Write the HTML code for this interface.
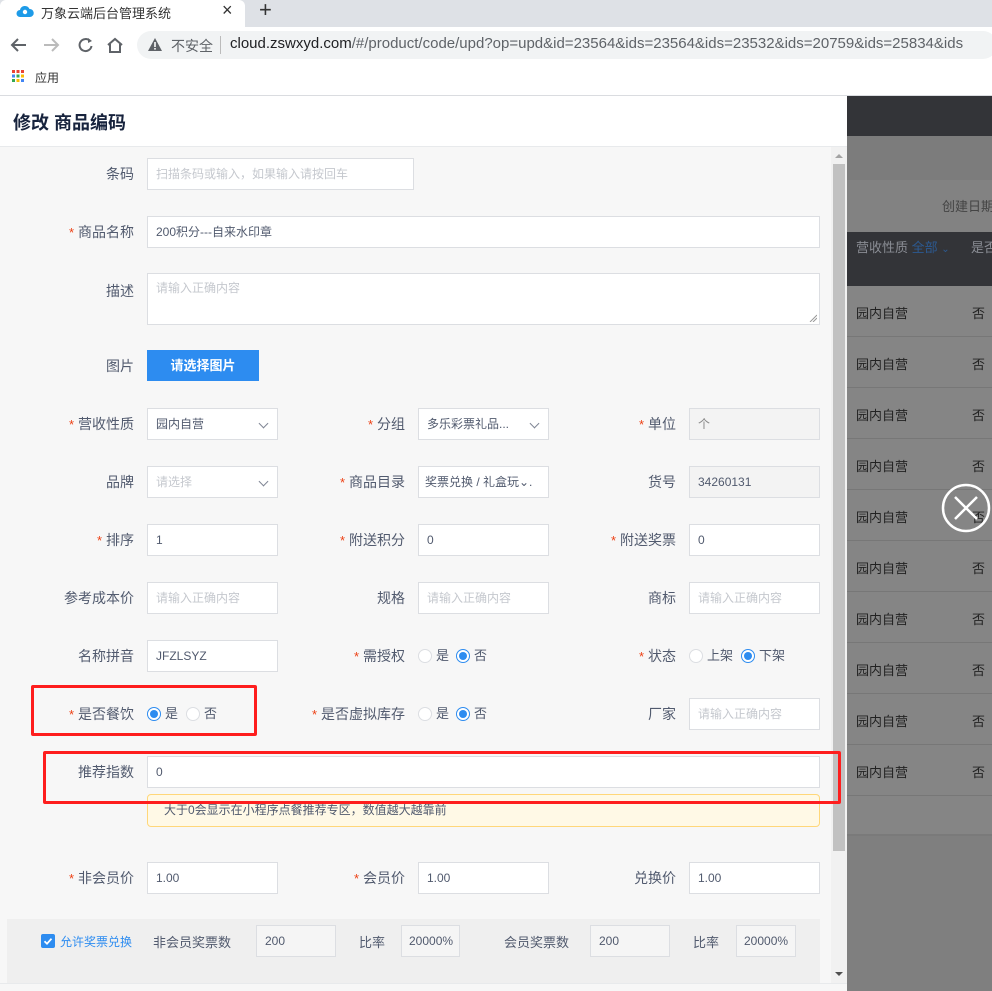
<!DOCTYPE html>
<html><head><meta charset="utf-8">
<style>
*{margin:0;padding:0;box-sizing:border-box}
body{width:992px;height:991px;overflow:hidden;position:relative;background:#fff;font-family:"Liberation Sans","Noto Sans CJK SC",sans-serif;font-size:13px;color:#515a6e}
.a{position:absolute}
.lb{position:absolute;width:134px;text-align:right;font-size:14px;color:#515a6e;line-height:20px}
.lb i{font-style:normal;color:#ed4014;font-size:13px;margin-right:4px}
.in{position:absolute;height:32px;background:#fff;border:1px solid #dcdee2;line-height:30px;padding-left:8px;font-size:12px;color:#515a6e;white-space:nowrap;overflow:hidden}
.ph{color:#c5c8ce}
.dis{background:#f3f3f3}
.chev{position:absolute;right:10px;top:11px;width:7px;height:7px;border-right:1.3px solid #808695;border-bottom:1.3px solid #808695;transform:rotate(45deg)}
.rad{position:absolute;width:14px;height:14px;border:1px solid #dcdee2;border-radius:50%;background:#fff}
.rad.on{border-color:#2d8cf0}
.rad.on:after{content:"";position:absolute;left:2px;top:2px;width:8px;height:8px;border-radius:50%;background:#2d8cf0}
.rt{position:absolute;font-size:13px;color:#515a6e;line-height:16px}
.row{position:absolute;left:847px;width:145px;height:51px;border-bottom:1px solid #777;background:#858585}
.row span{position:absolute;top:17px;font-size:13px;color:#222}
</style></head><body>
<div class="a" style="left:0;top:0;width:992px;height:27px;background:#dee1e6"></div>
<div class="a" style="left:0;top:0;width:245px;height:28px;background:#fff;border-radius:6px 6px 0 0"></div>
<svg class="a" style="left:16px;top:4px" width="18" height="16" viewBox="0 0 18 16"><path d="M4 13a3.5 3.5 0 0 1 0-7 5 5 0 0 1 9.5-1A4 4 0 0 1 14 13z" fill="#1e9be8"/><circle cx="9" cy="8" r="2.2" fill="#fff"/></svg>
<div class="a" style="left:41px;top:3px;font-size:13px;color:#333">万象云端后台管理系统</div>
<div class="a" style="left:222px;top:0px;font-size:18px;color:#333">×</div>
<div class="a" style="left:259px;top:-3px;font-size:22px;color:#333">+</div>
<svg class="a" style="left:10px;top:36px" width="120" height="18" viewBox="0 0 120 18"><path d="M16 9H3M8 3L2 9l6 6" stroke="#5f6368" stroke-width="2" fill="none"/><path d="M34 9h13M42 3l6 6-6 6" stroke="#bbb" stroke-width="2" fill="none"/><path d="M80 5a6 6 0 1 0 1.5 5" stroke="#5f6368" stroke-width="2" fill="none"/><path d="M78 2l4 3-4 2z" fill="#5f6368"/><path d="M98 9l7-6 7 6M100 8v8h10V8" stroke="#5f6368" stroke-width="2" fill="none"/></svg>
<div class="a" style="left:137px;top:31px;width:860px;height:28px;background:#f1f3f4;border-radius:14px"></div>
<svg class="a" style="left:147px;top:37px" width="16" height="15" viewBox="0 0 16 15"><path d="M8 1L15 14H1z" fill="#5f6368"/><rect x="7.2" y="5" width="1.6" height="5" fill="#fff"/><rect x="7.2" y="11" width="1.6" height="1.6" fill="#fff"/></svg>
<div class="a" style="left:171px;top:36px;font-size:14px;color:#5f6368">不安全</div>
<div class="a" style="left:220px;top:36px;width:1px;height:18px;background:#bbb"></div>
<div class="a" style="left:230px;top:35px;font-size:15px;color:#202124;white-space:nowrap">cloud.zswxyd.com<span style="color:#5f6368">/#/product/code/upd?op=upd&amp;id=23564&amp;ids=23564&amp;ids=23532&amp;ids=20759&amp;ids=25834&amp;ids</span></div>
<svg class="a" style="left:12px;top:70px" width="12" height="12"><rect x="0" y="0" width="3" height="3" fill="#ea4335"/><rect x="4.5" y="0" width="3" height="3" fill="#ea4335"/><rect x="9" y="0" width="3" height="3" fill="#ea4335"/><rect x="0" y="4.5" width="3" height="3" fill="#4285f4"/><rect x="4.5" y="4.5" width="3" height="3" fill="#34a853"/><rect x="9" y="4.5" width="3" height="3" fill="#fbbc05"/><rect x="0" y="9" width="3" height="3" fill="#34a853"/><rect x="4.5" y="9" width="3" height="3" fill="#fbbc05"/><rect x="9" y="9" width="3" height="3" fill="#4285f4"/></svg>
<div class="a" style="left:35px;top:69px;font-size:12px;color:#333">应用</div>
<div class="a" style="left:0;top:95px;width:992px;height:1px;background:#dadce0"></div>
<div class="a" style="left:13px;top:109px;font-size:18px;font-weight:bold;color:#17233d">修改 商品编码</div>
<div class="a" style="left:0;top:146px;width:847px;height:1px;background:#e8eaec"></div>
<div class="a" style="left:0;top:147px;width:831px;height:844px;background:#f7f7f7"></div>
<div class="a" style="left:831px;top:147px;width:16px;height:844px;background:#f1f1f1"></div>
<div class="a" style="left:833px;top:164px;width:12px;height:687px;background:#c1c1c1"></div>
<div class="a" style="left:835px;top:154px;width:0;height:0;border-left:4px solid transparent;border-right:4px solid transparent;border-bottom:4px solid #a3a3a3"></div>
<div class="a" style="left:835px;top:972px;width:0;height:0;border-left:4px solid transparent;border-right:4px solid transparent;border-top:4px solid #505050"></div>
<div class="a" style="left:0;top:983px;width:847px;height:8px;background:#f7f7f7;border-top:1px solid #e8eaec"></div>

<div class="lb" style="left:0;top:164px">条码</div>
<div class="in" style="left:147px;top:158px;width:267px"><span class="ph">扫描条码或输入，如果输入请按回车</span></div>
<div class="lb" style="left:0;top:222px"><i>*</i>商品名称</div>
<div class="in" style="left:147px;top:216px;width:673px">200积分---自来水印章</div>
<div class="lb" style="left:0;top:281px">描述</div>
<div class="in" style="left:147px;top:273px;width:673px;height:52px;line-height:28px"><span class="ph">请输入正确内容</span></div>
<svg class="a" style="left:809px;top:314px" width="8" height="8"><path d="M1 8L8 1M4 8L8 4" stroke="#999" stroke-width="1"/></svg>
<div class="lb" style="left:0;top:356px">图片</div>
<div class="a" style="left:147px;top:350px;width:112px;height:31px;background:#2d8cf0;color:#fff;font-size:13px;font-weight:bold;text-align:center;line-height:31px">请选择图片</div>

<div class="lb" style="left:0;top:414px"><i>*</i>营收性质</div>
<div class="in" style="left:147px;top:408px;width:131px">园内自营<span class="chev"></span></div>
<div class="lb" style="left:271px;top:414px"><i>*</i>分组</div>
<div class="in" style="left:418px;top:408px;width:131px">多乐彩票礼品...<span class="chev"></span></div>
<div class="lb" style="left:542px;top:414px"><i>*</i>单位</div>
<div class="in dis" style="left:689px;top:408px;width:131px;color:#888">个</div>

<div class="lb" style="left:0;top:472px">品牌</div>
<div class="in" style="left:147px;top:466px;width:131px"><span class="ph">请选择</span><span class="chev"></span></div>
<div class="lb" style="left:271px;top:472px"><i>*</i>商品目录</div>
<div class="in" style="left:418px;top:466px;width:131px;padding-left:6px">奖票兑换 / 礼盒玩⌄.</div>
<div class="lb" style="left:542px;top:472px">货号</div>
<div class="in dis" style="left:689px;top:466px;width:131px">34260131</div>

<div class="lb" style="left:0;top:530px"><i>*</i>排序</div>
<div class="in" style="left:147px;top:524px;width:131px">1</div>
<div class="lb" style="left:271px;top:530px"><i>*</i>附送积分</div>
<div class="in" style="left:418px;top:524px;width:131px">0</div>
<div class="lb" style="left:542px;top:530px"><i>*</i>附送奖票</div>
<div class="in" style="left:689px;top:524px;width:131px">0</div>

<div class="lb" style="left:0;top:588px">参考成本价</div>
<div class="in" style="left:147px;top:582px;width:131px"><span class="ph">请输入正确内容</span></div>
<div class="lb" style="left:271px;top:588px">规格</div>
<div class="in" style="left:418px;top:582px;width:131px"><span class="ph">请输入正确内容</span></div>
<div class="lb" style="left:542px;top:588px">商标</div>
<div class="in" style="left:689px;top:582px;width:131px"><span class="ph">请输入正确内容</span></div>

<div class="lb" style="left:0;top:646px">名称拼音</div>
<div class="in" style="left:147px;top:640px;width:131px">JFZLSYZ</div>
<div class="lb" style="left:271px;top:646px"><i>*</i>需授权</div>
<div class="rad" style="left:418px;top:649px"></div><div class="rt" style="left:436px;top:648px">是</div>
<div class="rad on" style="left:456px;top:649px"></div><div class="rt" style="left:474px;top:648px">否</div>
<div class="lb" style="left:542px;top:646px"><i>*</i>状态</div>
<div class="rad" style="left:689px;top:649px"></div><div class="rt" style="left:707px;top:648px">上架</div>
<div class="rad on" style="left:741px;top:649px"></div><div class="rt" style="left:759px;top:648px">下架</div>

<div class="lb" style="left:0;top:704px"><i>*</i>是否餐饮</div>
<div class="rad on" style="left:147px;top:707px"></div><div class="rt" style="left:165px;top:706px">是</div>
<div class="rad" style="left:186px;top:707px"></div><div class="rt" style="left:204px;top:706px">否</div>
<div class="lb" style="left:271px;top:704px;white-space:nowrap"><i>*</i>是否虚拟库存</div>
<div class="rad" style="left:418px;top:707px"></div><div class="rt" style="left:436px;top:706px">是</div>
<div class="rad on" style="left:456px;top:707px"></div><div class="rt" style="left:474px;top:706px">否</div>
<div class="lb" style="left:542px;top:704px">厂家</div>
<div class="in" style="left:689px;top:698px;width:131px"><span class="ph">请输入正确内容</span></div>

<div class="lb" style="left:0;top:762px">推荐指数</div>
<div class="in" style="left:147px;top:756px;width:673px">0</div>
<div class="a" style="left:147px;top:794px;width:673px;height:33px;background:#fff9e6;border:1px solid #ffd77a;border-radius:4px;font-size:12px;color:#515a6e;padding:6px 0 0 16px">大于0会显示在小程序点餐推荐专区，数值越大越靠前</div>

<div class="lb" style="left:0;top:868px"><i>*</i>非会员价</div>
<div class="in" style="left:147px;top:862px;width:131px">1.00</div>
<div class="lb" style="left:271px;top:868px"><i>*</i>会员价</div>
<div class="in" style="left:418px;top:862px;width:131px">1.00</div>
<div class="lb" style="left:542px;top:868px">兑换价</div>
<div class="in" style="left:689px;top:862px;width:131px">1.00</div>

<div class="a" style="left:7px;top:919px;width:813px;height:64px;background:#efefef"></div>
<div class="a" style="left:41px;top:934px;width:14px;height:14px;background:#2d8cf0;border-radius:2px"></div>
<svg class="a" style="left:41px;top:934px" width="14" height="14"><path d="M3.5 7.2l2.5 2.5 4.5-5" stroke="#fff" stroke-width="1.8" fill="none"/></svg>
<div class="a" style="left:60px;top:933px;font-size:12px;color:#2d8cf0">允许奖票兑换</div>
<div class="a" style="left:153px;top:932px;font-size:13px">非会员奖票数</div>
<div class="in" style="left:256px;top:925px;width:80px;background:#f5f5f5">200</div>
<div class="a" style="left:359px;top:932px;font-size:13px">比率</div>
<div class="in" style="left:401px;top:925px;width:59px;background:#f5f5f5;padding-left:7px">20000%</div>
<div class="a" style="left:504px;top:932px;font-size:13px">会员奖票数</div>
<div class="in" style="left:590px;top:925px;width:80px;background:#f5f5f5">200</div>
<div class="a" style="left:693px;top:932px;font-size:13px">比率</div>
<div class="in" style="left:736px;top:925px;width:60px;background:#f5f5f5;padding-left:7px">20000%</div>

<div class="a" style="left:31px;top:685px;width:226px;height:51px;border:3px solid #fe1e1e;border-radius:2px"></div>
<div class="a" style="left:43px;top:751px;width:798px;height:53px;border:3px solid #fe1e1e;border-radius:2px"></div>

<div class="a" style="left:847px;top:96px;width:145px;height:895px;background:#7f7f7f"></div>
<div class="a" style="left:847px;top:96px;width:145px;height:40px;background:#333438"></div>
<div class="a" style="left:847px;top:136px;width:145px;height:44px;background:#7c7c7c"></div>
<div class="a" style="left:847px;top:180px;width:145px;height:52px;background:#828282"></div>
<div class="a" style="left:942px;top:196px;font-size:13px;color:#444;white-space:nowrap">创建日期</div>
<div class="a" style="left:847px;top:232px;width:145px;height:54px;background:#333438;overflow:hidden"></div>
<div class="a" style="left:856px;top:237px;font-size:13px;color:#8a8d94;white-space:nowrap">营收性质 <span style="color:#2c5a92">全部</span> <span style="color:#2c5a92;font-size:10px">⌄</span></div>
<div class="a" style="left:971px;top:237px;font-size:13px;color:#8a8d94;white-space:nowrap">是否</div>
<div class="row" style="top:286px"><span style="left:9px">园内自营</span><span style="left:125px">否</span></div>
<div class="row" style="top:337px"><span style="left:9px">园内自营</span><span style="left:125px">否</span></div>
<div class="row" style="top:388px"><span style="left:9px">园内自营</span><span style="left:125px">否</span></div>
<div class="row" style="top:439px"><span style="left:9px">园内自营</span><span style="left:125px">否</span></div>
<div class="row" style="top:490px"><span style="left:9px">园内自营</span><span style="left:125px">否</span></div>
<div class="row" style="top:541px"><span style="left:9px">园内自营</span><span style="left:125px">否</span></div>
<div class="row" style="top:592px"><span style="left:9px">园内自营</span><span style="left:125px">否</span></div>
<div class="row" style="top:643px"><span style="left:9px">园内自营</span><span style="left:125px">否</span></div>
<div class="row" style="top:694px"><span style="left:9px">园内自营</span><span style="left:125px">否</span></div>
<div class="row" style="top:745px"><span style="left:9px">园内自营</span><span style="left:125px">否</span></div>
<div class="a" style="left:847px;top:796px;width:145px;height:40px;background:#858585;border-bottom:2px solid #7a7a7a"></div>
<svg class="a" style="left:940px;top:482px" width="52" height="52" viewBox="0 0 52 52"><circle cx="26" cy="26" r="23" stroke="#fff" stroke-width="2.5" fill="none"/><path d="M15 15L37 37M37 15L15 37" stroke="#fff" stroke-width="2.5"/></svg>
</body></html>
